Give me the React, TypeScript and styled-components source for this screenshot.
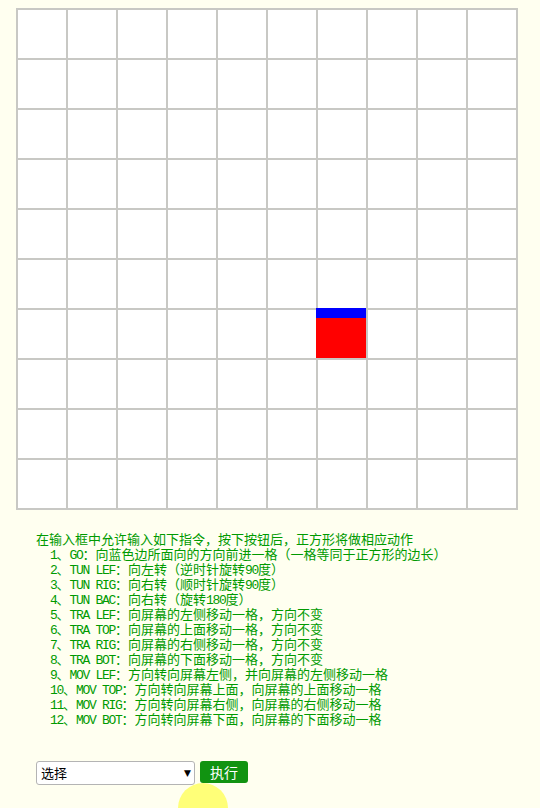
import React from "react";
import styled, { createGlobalStyle } from "styled-components";

const GlobalStyle = createGlobalStyle`
  html, body {
    margin: 0;
    padding: 0;
    background: #fffff0;
  }
  body {
    font-family: "Noto Sans CJK SC", sans-serif;
  }
`;

const Page = styled.div`
  padding: 8px 0 0 16px;
  width: 540px;
  height: 808px;
  box-sizing: border-box;
  overflow: hidden;
`;

const Board = styled.div`
  position: relative;
  width: 500px;
  border: 1px solid #c8c8c4;
  display: grid;
  grid-template-columns: repeat(10, 50px);
  grid-auto-rows: 50px;
  background: #ffffff;
`;

const Cell = styled.div`
  box-sizing: border-box;
  border: 1px solid #c8c8c4;
`;

const Square = styled.div<{ $col: number; $row: number }>`
  position: absolute;
  left: ${(p) => p.$col * 50 - 1}px;
  top: ${(p) => p.$row * 50 - 1}px;
  width: 50px;
  height: 50px;
  background: #ff0000;
  border-top: 10px solid #0000ff;
  box-sizing: border-box;
`;

const Instructions = styled.div`
  margin: 21px 0 0 20px;
  color: #009a00;
  font-size: 13px;
  line-height: 15px;
  font-family: "Noto Sans CJK SC", sans-serif;
`;

const Intro = styled.div`
  white-space: nowrap;
  height: 15px;
`;

const Item = styled.div`
  padding-left: 14px;
  white-space: nowrap;
  height: 15px;
`;

const Latin = styled.span`
  font-family: "Liberation Mono", monospace;
  font-size: 13px;
  line-height: 0;
  letter-spacing: -1.3px;
`;

const ControlRow = styled.div`
  position: relative;
  margin: 35px 0 0 20px;
  display: flex;
  align-items: flex-start;
  gap: 5px;
`;

const SelectWrap = styled.div`
  position: relative;
  width: 159px;
  height: 24px;
`;

const Select = styled.select`
  appearance: none;
  display: block;
  width: 159px;
  height: 24px;
  box-sizing: border-box;
  border: 1px solid #b4b4b4;
  border-radius: 3px;
  background: #ffffff;
  padding: 0 0 0 4px;
  font-family: "Noto Sans CJK SC", sans-serif;
  font-size: 13px;
  line-height: 22px;
  color: #000;
  outline: none;
`;

const Arrow = styled.span`
  position: absolute;
  right: 4px;
  top: 6px;
  font-size: 9px;
  line-height: 12px;
  color: #000;
  pointer-events: none;
  font-family: "DejaVu Sans", sans-serif;
`;

const RunButton = styled.button`
  display: block;
  width: 48px;
  height: 22px;
  border: none;
  border-radius: 3px;
  background: #119311;
  color: #ffffff;
  font-family: "Noto Sans CJK SC", sans-serif;
  font-size: 14px;
  line-height: 22px;
  padding: 0;
`;

const ClickMark = styled.div`
  position: absolute;
  left: 142px;
  top: 22px;
  width: 50px;
  height: 50px;
  border-radius: 50%;
  background: rgba(255, 255, 40, 0.6);
  pointer-events: none;
`;

const items = [
  "1、GO：向蓝色边所面向的方向前进一格（一格等同于正方形的边长）",
  "2、TUN LEF：向左转（逆时针旋转90度）",
  "3、TUN RIG：向右转（顺时针旋转90度）",
  "4、TUN BAC：向右转（旋转180度）",
  "5、TRA LEF：向屏幕的左侧移动一格，方向不变",
  "6、TRA TOP：向屏幕的上面移动一格，方向不变",
  "7、TRA RIG：向屏幕的右侧移动一格，方向不变",
  "8、TRA BOT：向屏幕的下面移动一格，方向不变",
  "9、MOV LEF：方向转向屏幕左侧，并向屏幕的左侧移动一格",
  "10、MOV TOP：方向转向屏幕上面，向屏幕的上面移动一格",
  "11、MOV RIG：方向转向屏幕右侧，向屏幕的右侧移动一格",
  "12、MOV BOT：方向转向屏幕下面，向屏幕的下面移动一格",
];

function renderMixed(text: string) {
  const parts = text.match(/[\x20-\x7e]+|[^\x20-\x7e]+/g) || [];
  return parts.map((part, i) =>
    /^[\x20-\x7e]+$/.test(part) ? <Latin key={i}>{part}</Latin> : <React.Fragment key={i}>{part}</React.Fragment>
  );
}

export default function App() {
  const cells = Array.from({ length: 100 }, (_, i) => <Cell key={i} />);
  return (
    <>
      <GlobalStyle />
      <Page>
        <Board>
          {cells}
          <Square $col={6} $row={6} />
        </Board>
        <Instructions>
          <Intro>在输入框中允许输入如下指令，按下按钮后，正方形将做相应动作</Intro>
          {items.map((t, i) => (
            <Item key={i}>{renderMixed(t)}</Item>
          ))}
        </Instructions>
        <ControlRow>
          <SelectWrap>
            <Select defaultValue="">
              <option value="">选择</option>
              <option value="GO">GO</option>
              <option value="TUN LEF">TUN LEF</option>
              <option value="TUN RIG">TUN RIG</option>
              <option value="TUN BAC">TUN BAC</option>
            </Select>
            <Arrow>▼</Arrow>
          </SelectWrap>
          <RunButton>执行</RunButton>
          <ClickMark />
        </ControlRow>
      </Page>
    </>
  );
}
